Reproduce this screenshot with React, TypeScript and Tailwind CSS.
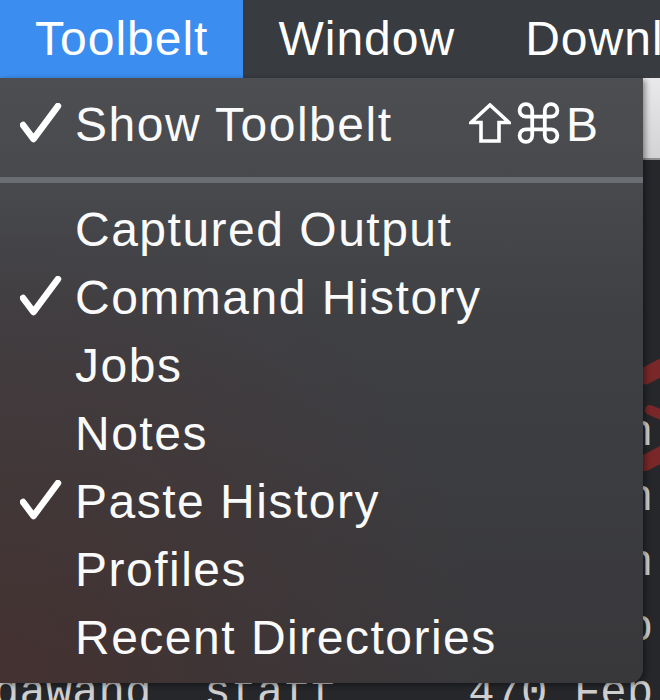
import React from 'react';

type MenuItem = {
  label: string;
  checked?: boolean;
};

const ITEMS: MenuItem[] = [
  { label: 'Captured Output' },
  { label: 'Command History', checked: true },
  { label: 'Jobs' },
  { label: 'Notes' },
  { label: 'Paste History', checked: true },
  { label: 'Profiles' },
  { label: 'Recent Directories' },
];

const TERMINAL_LINES = [
  '~ $ ls -l',
  'total 48',
  'drwx------+',
  'dawang  staff     170 Jun 15 18:02 doc',
  'dawang  staff     238 Jun 15 18:40 etc',
  'dawang  staff     136 Jun 20 11:05 tmp',
  'dawang  staff     442 Feb  3 08:27 var',
  'dawang  staff     470 Feb  9 14:51 opt',
];

const CheckMark = () => (
  <svg width="42" height="40" viewBox="0 0 42 40" className="mt-[12px] ml-[20px] shrink-0">
    <polyline
      points="3,22 13.5,36 38,3"
      fill="none"
      stroke="#ffffff"
      strokeWidth="6.5"
      strokeLinecap="round"
      strokeLinejoin="round"
    />
  </svg>
);

const ShiftGlyph = () => (
  <svg width="42" height="40" viewBox="0 0 42 40">
    <polygon
      points="21,2 40,19.5 30,19.5 30,38 12,38 12,19.5 2,19.5"
      fill="none"
      stroke="#ffffff"
      strokeWidth="3.6"
      strokeLinejoin="miter"
    />
  </svg>
);

const CommandGlyph = () => (
  <svg width="43" height="42" viewBox="2 2 20 20">
    <path
      d="M15 6v12a3 3 0 1 0 3-3H6a3 3 0 1 0 3 3V6a3 3 0 1 0-3 3h12a3 3 0 1 0-3-3"
      fill="none"
      stroke="#ffffff"
      strokeWidth="1.8"
      strokeLinecap="round"
      strokeLinejoin="round"
    />
  </svg>
);

// red marker scribbles drawn over the terminal in the original screenshot
const RedMarks = () => (
  <svg
    width="20"
    height="130"
    viewBox="640 350 20 130"
    className="absolute top-[350px] left-[640px] opacity-90"
  >
    <g stroke="#822828" strokeLinecap="round" fill="none">
      <line x1="645" y1="376" x2="664" y2="366" strokeWidth="17" />
      <line x1="650" y1="410" x2="664" y2="416" strokeWidth="10" />
      <line x1="645" y1="463" x2="664" y2="453" strokeWidth="16" />
    </g>
  </svg>
);

const MenuRow = ({ item }: { item: MenuItem }) => (
  <div className="flex h-[68px] items-start">
    <div className="flex h-full w-[75px] shrink-0">{item.checked && <CheckMark />}</div>
    <span className="leading-[68px] whitespace-nowrap">{item.label}</span>
  </div>
);

export default function App() {
  return (
    <div
      className="relative h-[700px] w-[660px] overflow-hidden bg-[#26272b]"
      style={{ fontFamily: '"Liberation Sans", Arial, sans-serif' }}
    >
      {/* menu bar */}
      <header className="flex h-[78px] bg-[#383b40] text-[48px] leading-[78px] tracking-[1px] text-white">
        <div className="bg-[#3b8ef0] px-[35px]">Toolbelt</div>
        <div className="px-[35px]">Window</div>
        <div className="px-[35px] whitespace-nowrap">Download</div>
      </header>

      {/* terminal window behind the menu */}
      <div className="flex flex-col">
        <div className="h-[82px] border-b-2 border-[#8e8e91] bg-gradient-to-b from-[#e9e9eb] to-[#d3d3d6]" />
        <div
          className="ml-[-7px] pt-[46px] text-[44px] leading-[65px] text-[#cfcfcf] whitespace-pre"
          style={{ fontFamily: '"Liberation Mono", "DejaVu Sans Mono", monospace' }}
        >
          {TERMINAL_LINES.map((line, i) => (
            <div key={i}>{line}</div>
          ))}
        </div>
      </div>

      <RedMarks />

      {/* dropdown menu */}
      <div className="absolute top-[78px] left-0 flex h-[605px] w-[643px] flex-col rounded-br-[14px] bg-[radial-gradient(circle_at_0%_100%,rgba(78,44,40,0.55),transparent_55%),linear-gradient(180deg,#4c4e52_0%,#47494d_18%,#3f4044_40%,#38383b_100%)] pt-[13px] text-[48px] tracking-[1.5px] text-[#fafafa] shadow-[2px_2px_6px_rgba(0,0,0,0.45)]">
        <div className="flex h-[68px] items-start">
          <div className="flex h-full w-[75px] shrink-0">
            <CheckMark />
          </div>
          <span className="flex-1 leading-[68px] whitespace-nowrap">Show Toolbelt</span>
          <div className="mr-[45px] flex h-full items-start gap-[6px]">
            <div className="mt-[12px]">
              <ShiftGlyph />
            </div>
            <div className="mt-[11px]">
              <CommandGlyph />
            </div>
            <span className="leading-[68px] tracking-normal">B</span>
          </div>
        </div>

        <div className="mt-[18px] mb-[13px] h-[6px] bg-[#6a6d71]" />

        {ITEMS.map((item) => (
          <MenuRow key={item.label} item={item} />
        ))}
      </div>
    </div>
  );
}
